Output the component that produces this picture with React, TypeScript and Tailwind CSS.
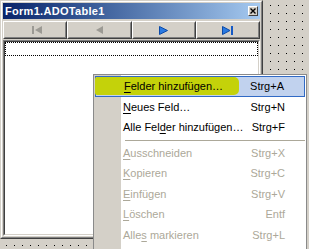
import React from "react";

function U({ c }: { c: string }) {
  return <span className="underline underline-offset-[2px] decoration-1">{c}</span>;
}

function NavBtn({ children }: { children: React.ReactNode }) {
  return (
    <div className="flex-1 h-full border border-t-white border-l-white border-r-[#404040] border-b-[#404040]">
      <div className="h-full border border-t-[#d4d0c8] border-l-[#d4d0c8] border-r-[#808080] border-b-[#808080] flex items-center justify-center">
        {children}
      </div>
    </div>
  );
}

type Item = {
  label: React.ReactNode;
  key: string;
  disabled?: boolean;
  active?: boolean;
};

function Row({ item }: { item: Item }) {
  if (item.active) {
    return (
      <div className="relative h-[20.5px] mx-px border border-[#316ac5] bg-[#c1d2ee] flex items-center justify-between pl-[28px] pr-[20px]">
        <div className="absolute left-[-1px] top-0 bottom-[1px] w-[144px] bg-[#c4d20a] rounded-r-[5px] rounded-l-[2px]" />
        <span className="relative text-black">{item.label}</span>
        <span className="relative text-black">{item.key}</span>
      </div>
    );
  }
  return (
    <div
      className={
        "h-[20.5px] flex items-center justify-between pl-[29px] pr-[21px] " +
        (item.disabled ? "text-[#aca899]" : "text-black")
      }
    >
      <span>{item.label}</span>
      <span>{item.key}</span>
    </div>
  );
}

export default function App() {
  const top: Item[] = [
    { label: <><U c="F" />elder hinzufügen…</>, key: "Strg+A", active: true },
    { label: <><U c="N" />eues Feld…</>, key: "Strg+N" },
    { label: <>Alle Fel<U c="d" />er hinzufügen…</>, key: "Strg+F" },
  ];
  const bottom: Item[] = [
    { label: <><U c="A" />usschneiden</>, key: "Strg+X", disabled: true },
    { label: <><U c="K" />opieren</>, key: "Strg+C", disabled: true },
    { label: <><U c="E" />infügen</>, key: "Strg+V", disabled: true },
    { label: <><U c="L" />öschen</>, key: "Entf", disabled: true },
    { label: <>Alle<U c="s" /> markieren</>, key: "Strg+L", disabled: true },
  ];

  return (
    <div className="relative w-[309px] h-[249px] overflow-hidden bg-black bg-[linear-gradient(to_right,transparent_1px,#d4d0c8_1px),linear-gradient(to_bottom,transparent_1px,#d4d0c8_1px)] bg-size-[8px_8px] bg-position-[6px_5px] font-['Liberation_Sans',Arial,sans-serif] text-[11px]">
      {/* Window */}
      <div className="w-[263px] h-[239px] bg-[#d4d0c8] border border-t-[#d4d0c8] border-l-[#d4d0c8] border-r-[#404040] border-b-[#404040]">
        <div className="h-full border border-t-white border-l-white border-r-[#808080] border-b-[#808080] p-px flex flex-col">
          {/* Title bar */}
          <div className="h-[16px] bg-linear-to-r from-[#0a246a] to-[#a6caf0] flex items-center justify-between pl-[2px] pr-[2px]">
            <span className="text-white font-bold text-[11px] tracking-[0.3px] leading-none">Form1.ADOTable1</span>
            <div className="w-[10px] h-[10px] bg-[#d4d0c8] border-t border-l border-t-white border-l-white border-r border-b border-r-[#404040] border-b-[#404040] flex items-center justify-center">
              <svg width="6" height="6" viewBox="0 0 6 6">
                <path d="M0.5 0.5 L5.5 5.5 M5.5 0.5 L0.5 5.5" stroke="#000" strokeWidth="1.4" />
              </svg>
            </div>
          </div>
          {/* Navigator */}
          <div className="mt-[2px] h-[18px] flex">
            <NavBtn>
              <svg width="10" height="8" viewBox="0 0 10 8" className="ml-[3px]">
                <rect x="0" y="0" width="2" height="8" fill="#9c9a94" />
                <path d="M10 0 L3 4 L10 8 Z" fill="#9c9a94" />
              </svg>
            </NavBtn>
            <NavBtn>
              <svg width="7" height="8" viewBox="0 0 7 8">
                <path d="M7 0 L0 4 L7 8 Z" fill="#9c9a94" />
              </svg>
            </NavBtn>
            <NavBtn>
              <svg width="9" height="9" viewBox="0 0 9 9">
                <path d="M0.5 0.5 L8.5 4.5 L0.5 8.5 Z" fill="#2a7ae2" stroke="#0b4aa8" strokeWidth="1" />
              </svg>
            </NavBtn>
            <NavBtn>
              <svg width="12" height="9" viewBox="0 0 12 9">
                <path d="M0.5 0.5 L8 4.5 L0.5 8.5 Z" fill="#2a7ae2" stroke="#0b4aa8" strokeWidth="1" />
                <rect x="9" y="0" width="2" height="9" fill="#1559c4" />
              </svg>
            </NavBtn>
          </div>
          {/* Grid */}
          <div className="mt-px flex-1 bg-white border border-t-[#808080] border-l-[#808080] border-r-white border-b-white">
            <div className="h-full border border-t-[#404040] border-l-[#404040] border-r-[#d4d0c8] border-b-[#d4d0c8]">
              <div className="h-[14px] border border-dotted border-black" />
            </div>
          </div>
        </div>
      </div>

      {/* Context menu */}
      <div className="absolute left-[93px] top-[74px] w-[214px] border border-[#8a8a8a] pt-px pb-[8px] bg-[linear-gradient(to_right,#d4d0c8_27px,white_27px)]">
        {top.map((it, i) => (
          <Row key={"t" + i} item={it} />
        ))}
        <div className="h-[5px] flex items-center pl-[31px] pr-px">
          <div className="h-px w-full bg-[#aca899]" />
        </div>
        {bottom.map((it, i) => (
          <Row key={"b" + i} item={it} />
        ))}
      </div>
    </div>
  );
}
